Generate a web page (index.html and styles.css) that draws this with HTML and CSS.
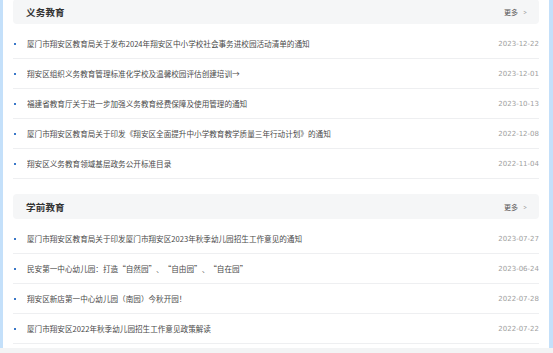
FILE: index.html
```html
<!DOCTYPE html>
<html lang="zh-CN">
<head>
<meta charset="utf-8">
<title>教育</title>
<link rel="stylesheet" href="styles.css">
</head>
<body>
<div class="frame">
  <div class="panel">
    <section class="block">
      <div class="block-head">
        <h2 class="block-title">义务教育</h2>
        <a class="more">更多<span class="chev">&gt;</span></a>
      </div>
      <ul class="list">
        <li class="item"><span class="dot"></span><span class="title">厦门市翔安区教育局关于发布2024年翔安区中小学校社会事务进校园活动清单的通知</span><span class="date">2023-12-22</span></li>
        <li class="item"><span class="dot"></span><span class="title">翔安区组织义务教育管理标准化学校及温馨校园评估创建培训→</span><span class="date">2023-12-01</span></li>
        <li class="item"><span class="dot"></span><span class="title">福建省教育厅关于进一步加强义务教育经费保障及使用管理的通知</span><span class="date">2023-10-13</span></li>
        <li class="item"><span class="dot"></span><span class="title">厦门市翔安区教育局关于印发《翔安区全面提升中小学教育教学质量三年行动计划》的通知</span><span class="date">2022-12-08</span></li>
        <li class="item"><span class="dot"></span><span class="title">翔安区义务教育领域基层政务公开标准目录</span><span class="date">2022-11-04</span></li>
      </ul>
    </section>
    <section class="block">
      <div class="block-head">
        <h2 class="block-title">学前教育</h2>
        <a class="more">更多<span class="chev">&gt;</span></a>
      </div>
      <ul class="list">
        <li class="item"><span class="dot"></span><span class="title">厦门市翔安区教育局关于印发厦门市翔安区2023年秋季幼儿园招生工作意见的通知</span><span class="date">2023-07-27</span></li>
        <li class="item"><span class="dot"></span><span class="title">民安第一中心幼儿园：打造<span class="qo">“</span>自然园<span class="qc">”</span>、<span class="qo">“</span>自由园<span class="qc">”</span>、<span class="qo">“</span>自在园<span class="qc">”</span></span><span class="date">2023-06-24</span></li>
        <li class="item"><span class="dot"></span><span class="title">翔安区新店第一中心幼儿园（南园）今秋开园！</span><span class="date">2022-07-28</span></li>
        <li class="item"><span class="dot"></span><span class="title">厦门市翔安区2022年秋季幼儿园招生工作意见政策解读</span><span class="date">2022-07-22</span></li>
      </ul>
    </section>
  </div>
  <div class="footer-strip"></div>
</div>
</body>
</html>
```
FILE: styles.css
```css
* { box-sizing: border-box; }
html, body {
  margin: 0;
  padding: 0;
  background: #f3f4f5;
  font-family: "Noto Sans CJK SC", "Noto Sans", sans-serif;
}
.frame {
  width: 553px;
  height: 353px;
  overflow: hidden;
  display: flex;
  flex-direction: column;
}
.panel {
  height: 349px;
  margin-top: -1px;
  background: #ffffff;
  border-left: 3px solid #c4e0fa;
  border-right: 4px solid #c4e0fa;
  padding: 0 10px 0 10px;
  display: flex;
  flex-direction: column;
  gap: 15px;
}
.footer-strip {
  flex: 1;
  background: #f3f4f5;
}
.block-head {
  height: 25px;
  background: #f5f6f7;
  border-radius: 4px;
  display: flex;
  align-items: center;
  justify-content: space-between;
  padding: 0 12px 0 13px;
}
.block-title {
  margin: 0;
  font-size: 9.5px;
  font-weight: 700;
  color: #333;
  letter-spacing: 0.2px;
}
.more {
  font-size: 7px;
  color: #555;
  display: flex;
  align-items: center;
  gap: 5px;
}
.chev {
  color: #999;
  font-size: 7px;
  transform: scaleX(0.8);
}
.list {
  list-style: none;
  margin: 0;
  padding: 5px 0 0 0;
}
.item {
  height: 30px;
  border-bottom: 1px solid #eeeff1;
  display: flex;
  align-items: center;
  padding-left: 1px;
}
.dot {
  width: 2px;
  height: 2px;
  background: #3a78c8;
  flex: none;
  margin-right: 11px;
}
.title {
  flex: 1;
  font-size: 7.6px;
  color: #4a4a4a;
  white-space: nowrap;
  overflow: hidden;
}
.qo, .qc {
  display: inline-block;
  width: 1em;
}
.qo { text-align: right; }
.qc { text-align: left; }
.date {
  flex: none;
  font-size: 7px;
  color: #a0a0a0;
  font-family: "DejaVu Sans", "Noto Sans", sans-serif;
  letter-spacing: 0;
}
```
